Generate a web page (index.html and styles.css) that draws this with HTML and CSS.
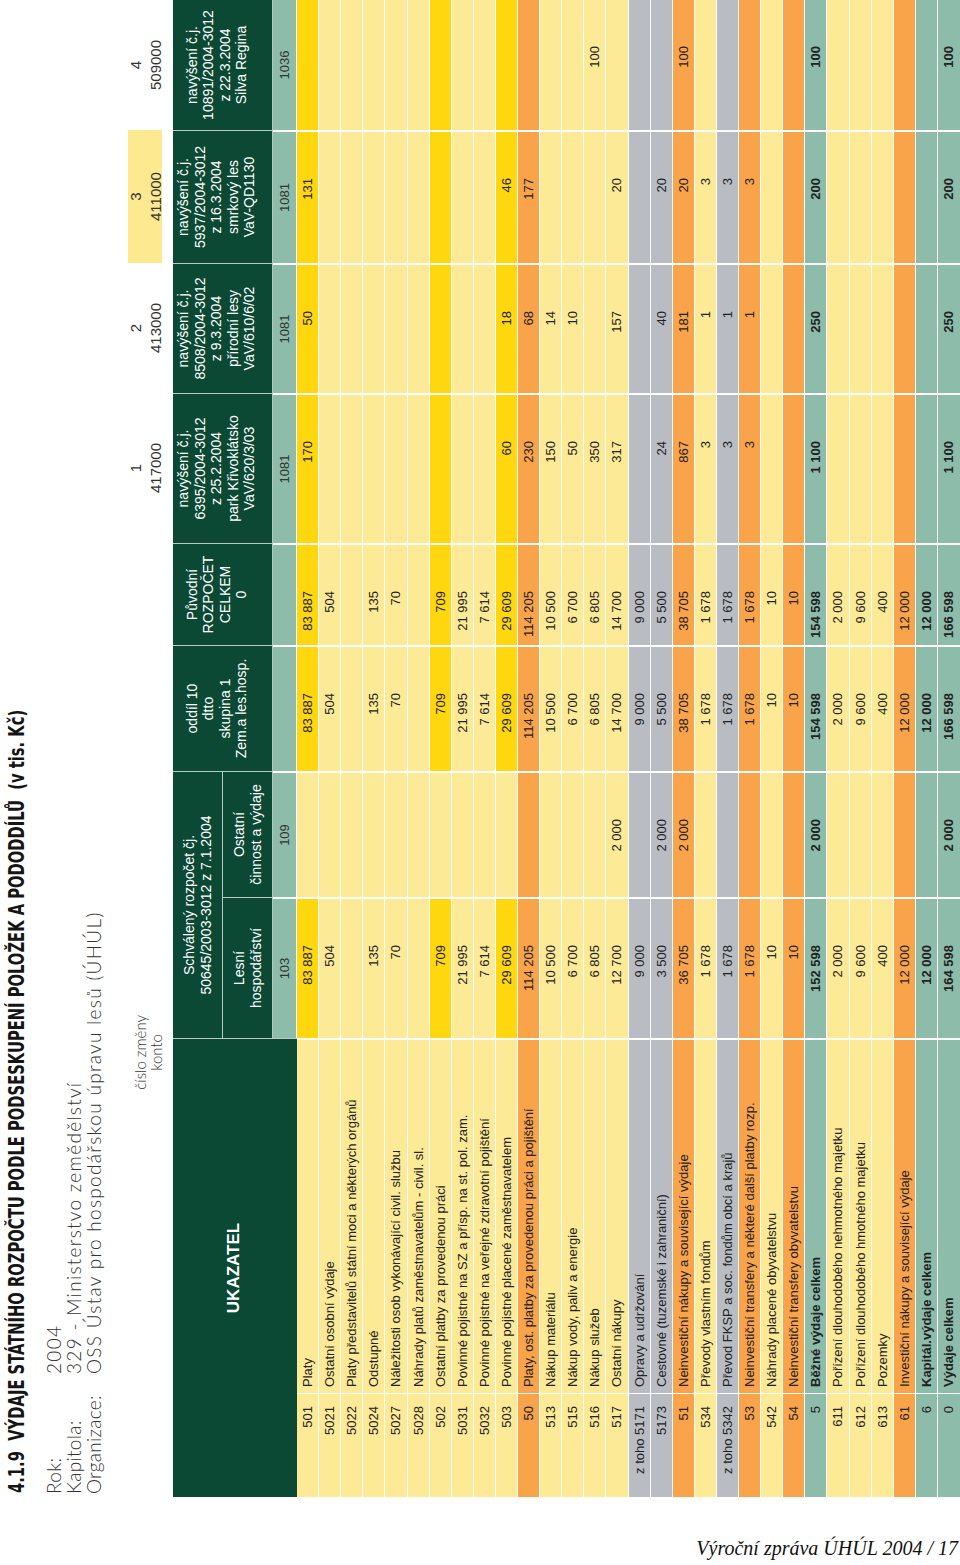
FILE: index.html
```html
<!DOCTYPE html>
<html lang="cs">
<head>
<meta charset="utf-8">
<title>Výdaje státního rozpočtu</title>
<link rel="stylesheet" href="styles.css">
</head>
<body>
<div class="stage">
  <div class="sheet">
    <h1 class="title"><span>4.1.9&nbsp;&nbsp;VÝDAJE STÁTNÍHO ROZPOČTU PODLE PODSESKUPENÍ POLOŽEK A PODODDÍLŮ&nbsp;&nbsp;(v tis. Kč)</span></h1>
    <div class="info">
      <div class="info-row"><span class="key">Rok:</span><span>2004</span></div>
      <div class="info-row"><span class="key">Kapitola:</span><span>329 - Ministerstvo zemědělství</span></div>
      <div class="info-row"><span class="key">Organizace:</span><span>OSS Ústav pro hospodářskou úpravu lesů (ÚHÚL)</span></div>
    </div>

    <div class="grid">
      <!-- pre-header -->
      <div class="pre-label"><div>číslo změny<br>konto</div></div>
      <div class="pre-fill"></div>
      <div class="pre-yellow"></div>
      <div class="pre c7 r1">1</div>
      <div class="pre c8 r1">2</div>
      <div class="pre c9 r1">3</div>
      <div class="pre c10 r1">4</div>
      <div class="pre c7 r2">417000</div>
      <div class="pre c8 r2">413000</div>
      <div class="pre c9 r2">411000</div>
      <div class="pre c10 r2">509000</div>
      <div class="spacer"></div>

      <!-- header -->
      <div class="h h-uk">UKAZATEL</div>
      <div class="h h-sch">Schválený rozpočet čj.<br>50645/2003-3012 z 7.1.2004</div>
      <div class="h h-les">Lesní<br>hospodářství</div>
      <div class="h h-ost">Ostatní<br>činnost a výdaje</div>
      <div class="h h-tall c5">oddíl 10<br>dtto<br>skupina 1<br>Zem.a les.hosp.</div>
      <div class="h h-tall c6">Původní<br>ROZPOČET<br>CELKEM<br>0</div>
      <div class="h h-tall c7">navýšení č.j.<br>6395/2004-3012<br>z 25.2.2004<br>park Křivoklátsko<br>VaV/620/3/03</div>
      <div class="h h-tall c8">navýšení č.j.<br>8508/2004-3012<br>z 9.3.2004<br>přírodní lesy<br>VaV/610/6/02</div>
      <div class="h h-tall c9">navýšení č.j.<br>5937/2004-3012<br>z 16.3.2004<br>smrkový les<br>VaV-QD1130</div>
      <div class="h h-tall c10 hl">navýšení č.j.<br>10891/2004-3012<br>z 22.3.2004<br>Silva Regina</div>

      <!-- code row -->
      <div class="k c3">103</div>
      <div class="k c4">109</div>
      <div class="k c5"></div>
      <div class="k c6"></div>
      <div class="k c7">1081</div>
      <div class="k c8">1081</div>
      <div class="k c9">1081</div>
      <div class="k c10 kl">1036</div>

      <!-- data rows -->
      <div class="r y"><div class="c code">501</div><div class="c lab">Platy</div><div class="c n">83 887</div><div class="c n x"></div><div class="c n">83 887</div><div class="c n">83 887</div><div class="c n">170</div><div class="c n">50</div><div class="c n">131</div><div class="c n"></div></div>
      <div class="r"><div class="c code">5021</div><div class="c lab">Ostatní osobní výdaje</div><div class="c n">504</div><div class="c n"></div><div class="c n">504</div><div class="c n">504</div><div class="c n"></div><div class="c n"></div><div class="c n"></div><div class="c n"></div></div>
      <div class="r"><div class="c code">5022</div><div class="c lab">Platy představitelů státní moci a některých orgánů</div><div class="c n"></div><div class="c n"></div><div class="c n"></div><div class="c n"></div><div class="c n"></div><div class="c n"></div><div class="c n"></div><div class="c n"></div></div>
      <div class="r"><div class="c code">5024</div><div class="c lab">Odstupné</div><div class="c n">135</div><div class="c n"></div><div class="c n">135</div><div class="c n">135</div><div class="c n"></div><div class="c n"></div><div class="c n"></div><div class="c n"></div></div>
      <div class="r"><div class="c code">5027</div><div class="c lab">Náležitosti osob vykonávající civil. službu</div><div class="c n">70</div><div class="c n"></div><div class="c n">70</div><div class="c n">70</div><div class="c n"></div><div class="c n"></div><div class="c n"></div><div class="c n"></div></div>
      <div class="r"><div class="c code">5028</div><div class="c lab">Náhrady platů zaměstnavatelům - civil. sl.</div><div class="c n"></div><div class="c n"></div><div class="c n"></div><div class="c n"></div><div class="c n"></div><div class="c n"></div><div class="c n"></div><div class="c n"></div></div>
      <div class="r y"><div class="c code">502</div><div class="c lab">Ostatní platby za provedenou práci</div><div class="c n">709</div><div class="c n x"></div><div class="c n">709</div><div class="c n">709</div><div class="c n"></div><div class="c n"></div><div class="c n"></div><div class="c n"></div></div>
      <div class="r"><div class="c code">5031</div><div class="c lab">Povinné pojistné na SZ a přísp. na st. pol. zam.</div><div class="c n">21 995</div><div class="c n"></div><div class="c n">21 995</div><div class="c n">21 995</div><div class="c n"></div><div class="c n"></div><div class="c n"></div><div class="c n"></div></div>
      <div class="r"><div class="c code">5032</div><div class="c lab">Povinné pojistné na veřejné zdravotní pojištění</div><div class="c n">7 614</div><div class="c n"></div><div class="c n">7 614</div><div class="c n">7 614</div><div class="c n"></div><div class="c n"></div><div class="c n"></div><div class="c n"></div></div>
      <div class="r y"><div class="c code">503</div><div class="c lab">Povinné pojistné placené zaměstnavatelem</div><div class="c n">29 609</div><div class="c n x"></div><div class="c n">29 609</div><div class="c n">29 609</div><div class="c n">60</div><div class="c n">18</div><div class="c n">46</div><div class="c n"></div></div>
      <div class="r o"><div class="c code">50</div><div class="c lab">Platy, ost. platby za provedenou práci a pojištění</div><div class="c n">114 205</div><div class="c n"></div><div class="c n">114 205</div><div class="c n">114 205</div><div class="c n">230</div><div class="c n">68</div><div class="c n">177</div><div class="c n"></div></div>
      <div class="r"><div class="c code">513</div><div class="c lab">Nákup materiálu</div><div class="c n">10 500</div><div class="c n"></div><div class="c n">10 500</div><div class="c n">10 500</div><div class="c n">150</div><div class="c n">14</div><div class="c n"></div><div class="c n"></div></div>
      <div class="r"><div class="c code">515</div><div class="c lab">Nákup vody, paliv a energie</div><div class="c n">6 700</div><div class="c n"></div><div class="c n">6 700</div><div class="c n">6 700</div><div class="c n">50</div><div class="c n">10</div><div class="c n"></div><div class="c n"></div></div>
      <div class="r"><div class="c code">516</div><div class="c lab">Nákup služeb</div><div class="c n">6 805</div><div class="c n"></div><div class="c n">6 805</div><div class="c n">6 805</div><div class="c n">350</div><div class="c n"></div><div class="c n"></div><div class="c n">100</div></div>
      <div class="r"><div class="c code">517</div><div class="c lab">Ostatní nákupy</div><div class="c n">12 700</div><div class="c n">2 000</div><div class="c n">14 700</div><div class="c n">14 700</div><div class="c n">317</div><div class="c n">157</div><div class="c n">20</div><div class="c n"></div></div>
      <div class="r g"><div class="c code">z toho 5171</div><div class="c lab">Opravy a udržování</div><div class="c n">9 000</div><div class="c n"></div><div class="c n">9 000</div><div class="c n">9 000</div><div class="c n"></div><div class="c n"></div><div class="c n"></div><div class="c n"></div></div>
      <div class="r g"><div class="c code">5173</div><div class="c lab">Cestovné (tuzemské i zahraniční)</div><div class="c n">3 500</div><div class="c n">2 000</div><div class="c n">5 500</div><div class="c n">5 500</div><div class="c n">24</div><div class="c n">40</div><div class="c n">20</div><div class="c n"></div></div>
      <div class="r o"><div class="c code">51</div><div class="c lab">Neinvestiční nákupy a související výdaje</div><div class="c n">36 705</div><div class="c n">2 000</div><div class="c n">38 705</div><div class="c n">38 705</div><div class="c n">867</div><div class="c n">181</div><div class="c n">20</div><div class="c n">100</div></div>
      <div class="r"><div class="c code">534</div><div class="c lab">Převody vlastním fondům</div><div class="c n">1 678</div><div class="c n"></div><div class="c n">1 678</div><div class="c n">1 678</div><div class="c n">3</div><div class="c n">1</div><div class="c n">3</div><div class="c n"></div></div>
      <div class="r g"><div class="c code">z toho 5342</div><div class="c lab">Převod FKSP a soc. fondům obcí a krajů</div><div class="c n">1 678</div><div class="c n"></div><div class="c n">1 678</div><div class="c n">1 678</div><div class="c n">3</div><div class="c n">1</div><div class="c n">3</div><div class="c n"></div></div>
      <div class="r o"><div class="c code">53</div><div class="c lab">Neinvestiční transfery a některé další platby rozp.</div><div class="c n">1 678</div><div class="c n"></div><div class="c n">1 678</div><div class="c n">1 678</div><div class="c n">3</div><div class="c n">1</div><div class="c n">3</div><div class="c n"></div></div>
      <div class="r"><div class="c code">542</div><div class="c lab">Náhrady placené obyvatelstvu</div><div class="c n">10</div><div class="c n"></div><div class="c n">10</div><div class="c n">10</div><div class="c n"></div><div class="c n"></div><div class="c n"></div><div class="c n"></div></div>
      <div class="r o"><div class="c code">54</div><div class="c lab">Neinvestiční transfery obyvatelstvu</div><div class="c n">10</div><div class="c n"></div><div class="c n">10</div><div class="c n">10</div><div class="c n"></div><div class="c n"></div><div class="c n"></div><div class="c n"></div></div>
      <div class="r t"><div class="c code">5</div><div class="c lab">Běžné výdaje celkem</div><div class="c n">152 598</div><div class="c n">2 000</div><div class="c n">154 598</div><div class="c n">154 598</div><div class="c n">1 100</div><div class="c n">250</div><div class="c n">200</div><div class="c n">100</div></div>
      <div class="r"><div class="c code">611</div><div class="c lab">Pořízení dlouhodobého nehmotného majetku</div><div class="c n">2 000</div><div class="c n"></div><div class="c n">2 000</div><div class="c n">2 000</div><div class="c n"></div><div class="c n"></div><div class="c n"></div><div class="c n"></div></div>
      <div class="r"><div class="c code">612</div><div class="c lab">Pořízení dlouhodobého hmotného majetku</div><div class="c n">9 600</div><div class="c n"></div><div class="c n">9 600</div><div class="c n">9 600</div><div class="c n"></div><div class="c n"></div><div class="c n"></div><div class="c n"></div></div>
      <div class="r"><div class="c code">613</div><div class="c lab">Pozemky</div><div class="c n">400</div><div class="c n"></div><div class="c n">400</div><div class="c n">400</div><div class="c n"></div><div class="c n"></div><div class="c n"></div><div class="c n"></div></div>
      <div class="r o"><div class="c code">61</div><div class="c lab">Investiční nákupy a související výdaje</div><div class="c n">12 000</div><div class="c n"></div><div class="c n">12 000</div><div class="c n">12 000</div><div class="c n"></div><div class="c n"></div><div class="c n"></div><div class="c n"></div></div>
      <div class="r t"><div class="c code">6</div><div class="c lab">Kapitál.výdaje celkem</div><div class="c n">12 000</div><div class="c n"></div><div class="c n">12 000</div><div class="c n">12 000</div><div class="c n"></div><div class="c n"></div><div class="c n"></div><div class="c n"></div></div>
      <div class="r t last"><div class="c code">0</div><div class="c lab">Výdaje celkem</div><div class="c n">164 598</div><div class="c n">2 000</div><div class="c n">166 598</div><div class="c n">166 598</div><div class="c n">1 100</div><div class="c n">250</div><div class="c n">200</div><div class="c n">100</div></div>
    </div>
  </div>
</div>
<footer class="foot">Výroční zpráva ÚHÚL 2004 / 17</footer>
</body>
</html>
```

FILE: styles.css
```css
* { box-sizing: border-box; }

html, body {
  margin: 0;
  padding: 0;
  background: #ffffff;
}

body {
  width: 960px;
  height: 1565px;
  overflow: hidden;
  font-family: "Liberation Sans", Arial, sans-serif;
  color: #222;
}

.stage {
  width: 960px;
  height: 1535px;
}

/* the printed sheet is laid out upright (1565 x 960) and turned a quarter to the left */
.sheet {
  width: 1565px;
  height: 960px;
  padding-left: 68px;
  display: flex;
  flex-direction: column;
  transform-origin: 0 0;
  transform: translateY(1565px) rotate(-90deg);
}

.title {
  margin: 0;
  height: 34px;
  line-height: 34px;
  padding-left: 4px;
  font-family: "DejaVu Sans Condensed", "DejaVu Sans", sans-serif;
  font-stretch: condensed;
  font-weight: bold;
  font-size: 21px;
  color: #151515;
  white-space: nowrap;
}

.title span {
  display: inline-block;
  transform: scaleX(0.78);
  transform-origin: 0 50%;
}

.info {
  margin-top: 10px;
  height: 60px;
  padding-left: 3px;
  font-family: Lato, "Open Sans", sans-serif;
  font-weight: 300;
  font-size: 19px;
  line-height: 20px;
  letter-spacing: 1.3px;
  color: #333;
}

.info-row {
  display: flex;
  white-space: nowrap;
}

.info-row .key {
  width: 120px;
  letter-spacing: 0.3px;
}

/* ---------- grid ---------- */
.grid {
  margin-top: 16px;
  height: 840px;
  display: grid;
  grid-template-columns: 104px 355px 141px 126px 126px 102px 150px 130px 133px 130px;
  grid-template-rows: 24px 23px 6px 50px 50px 24px repeat(30, 1fr);
  font-size: 13px;
}

.pre-label {
  grid-column: 1 / 4;
  grid-row: 1 / 4;
  display: flex;
  justify-content: flex-end;
  align-items: flex-end;
  padding-right: 118px;
  padding-bottom: 9px;
  font-family: Lato, "Open Sans", sans-serif;
  font-weight: 300;
  font-size: 15px;
  line-height: 16px;
  color: #333;
  text-align: center;
}

.pre-fill { grid-column: 4 / 7; grid-row: 1 / 3; }
.spacer { grid-column: 4 / 11; grid-row: 3; }

.pre-yellow {
  grid-column: 9;
  grid-row: 1 / 3;
  margin: 8px 0 5px;
  background: #fde98f;
}

.pre {
  display: flex;
  align-items: center;
  justify-content: center;
  font-size: 15px;
  color: #333;
}

.r1 { grid-row: 1; padding-top: 6px; }
.r2 { grid-row: 2; }
.c3 { grid-column: 3; }
.c4 { grid-column: 4; }
.c5 { grid-column: 5; }
.c6 { grid-column: 6; }
.c7 { grid-column: 7; }
.c8 { grid-column: 8; }
.c9 { grid-column: 9; }
.c10 { grid-column: 10; }

/* header */
.h {
  background: #0b4935;
  color: #ffffff;
  display: flex;
  align-items: center;
  justify-content: center;
  text-align: center;
  font-size: 14px;
  line-height: 16.5px;
  border-right: 1px solid #b9c8c0;
  border-bottom: 1px solid #b9c8c0;
  white-space: nowrap;
}

.h-uk {
  grid-column: 1 / 3;
  grid-row: 4 / 7;
  font-weight: bold;
  font-size: 17px;
  border-bottom: 0;
  padding-bottom: 2px;
}

.h-sch { grid-column: 3 / 5; grid-row: 4; }
.h-les { grid-column: 3; grid-row: 5; }
.h-ost { grid-column: 4; grid-row: 5; }
.h-tall { grid-row: 4 / 6; padding-bottom: 12px; }
.h.hl { border-right: 0; }

/* code row */
.k {
  grid-row: 6;
  background: #8ebcab;
  color: #333;
  display: flex;
  align-items: center;
  justify-content: center;
  border-right: 2px solid #ffffff;
  border-bottom: 1px solid #ffffff;
  font-size: 13px;
}

.k.kl { border-right: 0; }

/* data rows */
.r { display: contents; }

.c {
  display: flex;
  align-items: center;
  background: #fdea96;
  border-right: 2px solid #ffffff;
  border-bottom: 1px solid #ffffff;
  white-space: nowrap;
  overflow: hidden;
  color: #222;
}

.r > .c:last-child { border-right: 0; }
.r.last > .c { border-bottom: 0; }

.code {
  justify-content: flex-end;
  padding-right: 12px;
  border-right-width: 1px;
}

.lab { padding-left: 6px; }

.n {
  justify-content: flex-end;
  padding-right: 46px;
}

.r.y > .n { background: #fed70e; }
.r.y > .n.x { background: #fdea96; }
.r.o > .c { background: #f9a44b; }
.r.g > .c { background: #b9bdc3; }
.r.t > .c { background: #8ebcab; }
.r.t > .lab,
.r.t > .n { font-weight: bold; }

/* footer */
.foot {
  text-align: right;
  padding-right: 2px;
  font-family: "Liberation Serif", "Times New Roman", serif;
  font-style: italic;
  font-size: 20px;
  line-height: 26px;
  color: #111;
}
```
